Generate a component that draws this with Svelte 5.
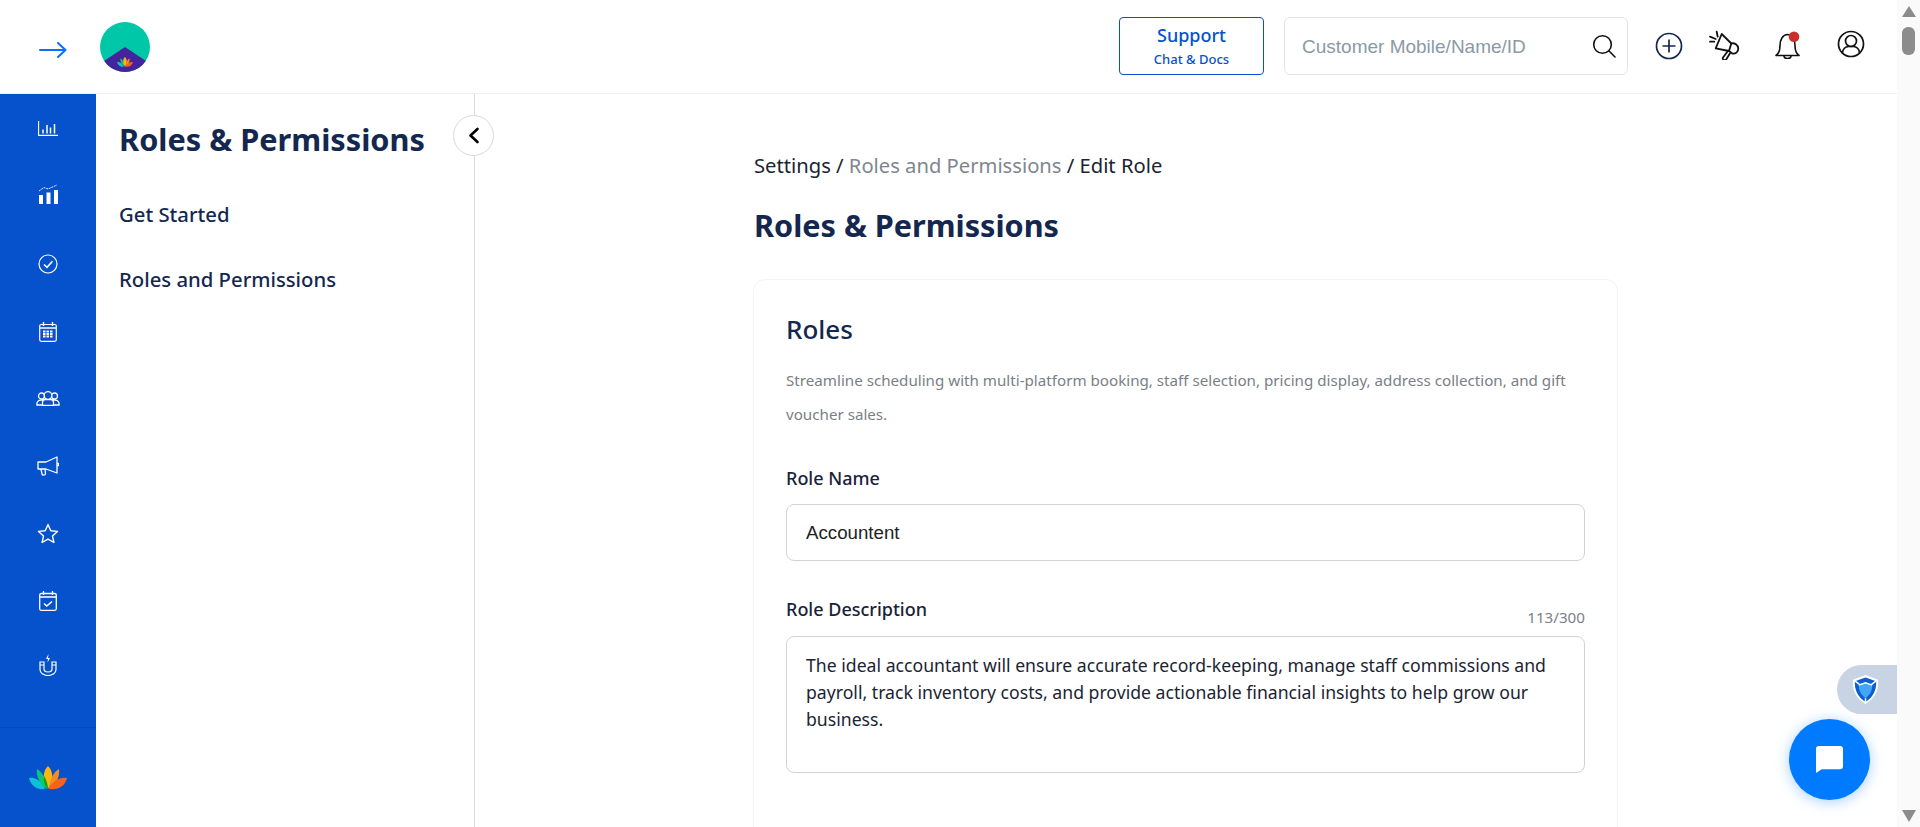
<script>
  const desc = "The ideal accountant will ensure accurate record-keeping, manage staff commissions and payroll, track inventory costs, and provide actionable financial insights to help grow our business.";
</script>

<div class="app">
  <div class="page">
    <header class="top">
      <svg class="arrow" width="28" height="16" viewBox="0 0 28 16" fill="none" stroke="#0d6efd" stroke-width="2" stroke-linecap="round" stroke-linejoin="round"><path d="M1 8H26.500M19 1l7.500 7-7.500 7"/></svg>
      <svg class="logo" width="50" height="52" viewBox="0 0 50 52">
        <defs><clipPath id="c"><circle cx="25" cy="26" r="25"/></clipPath></defs>
        <g clip-path="url(#c)">
          <rect width="50" height="52" fill="#00c7a8"/>
          <path d="M25 26L46 40V52H4V40Z" fill="#43249c"/>
        </g>
        <g transform="translate(17 36) scale(.42)">
          <path d="M0 12c6-1 13 3 16 11-8 1-14-3-16-11z" fill="#0dc1d6"/>
          <path d="M8 3c5 3 9 9 10 20-7-4-11-12-10-20z" fill="#0bc57a"/>
          <path d="M19 0c3 3 5 7 4 15l-4 8-4-8c-1-8 1-12 4-15z" fill="#fdb50f"/>
          <path d="M30 3c1 8-3 16-10 20 1-11 5-17 10-20z" fill="#f68b1f"/>
          <path d="M38 12c-2 8-8 12-18 11 3-8 11-12 18-11z" fill="#f6631a"/>
        </g>
      </svg>
      <div class="spacer"></div>
      <div class="support"><span class="s1">Support</span><span class="s2">Chat &amp; Docs</span></div>
      <div class="search">
        <span class="ph">Customer Mobile/Name/ID</span>
        <svg width="24" height="24" viewBox="0 0 24 24" fill="none" stroke="#111" stroke-width="1.600" stroke-linecap="round"><circle cx="10.500" cy="10.500" r="8.800"/><path d="M16.800 16.800L23 23"/></svg>
      </div>
      <svg class="hplus" width="28" height="28" viewBox="0 0 28 28" fill="none" stroke="#14274e" stroke-width="1.700"><circle cx="14" cy="14" r="12.500"/><path d="M14 7.500v13M7.500 14h13"/></svg>
      <svg class="hmega" width="32" height="30" viewBox="0 0 32 30" fill="none" stroke="#111" stroke-width="1.800" stroke-linejoin="round" stroke-linecap="round"><path d="M13.700 4L7.700 18.300 21 21 23.300 13.500z"/><path d="M23.300 13.500c3-1 7 1.500 7 5.300 0 3.500-3.300 5.500-6.300 4.500L21 21"/><path d="M19.500 21.500l-4.500 6c-1.300 1.700 1.800 3.700 3.300 1.700l3.700-6"/><path d="M8.700 1.700l1 5M2 6.700L7.700 9M2 11.700h4.300"/></svg>
      <svg class="hbell" width="25" height="28" viewBox="0 0 25 28" fill="none" stroke="#111" stroke-width="1.600" stroke-linejoin="round"><path d="M1 24.500c3-2 4-5 4-10 0-6 3-11 7.500-11s7.500 5 7.500 11c0 5 1 8 4 10z"/><path d="M9 25c0 3.500 7 3.500 7 0"/><circle cx="19" cy="5.700" r="5.300" fill="#c9302c" stroke="none"/></svg>
      <svg class="huser" width="28" height="28" viewBox="0 0 28 28" fill="none" stroke="#111" stroke-width="1.700"><circle cx="14" cy="14" r="12.500"/><circle cx="14" cy="11" r="5.500"/><path d="M5.500 23c0-4 3-6.500 6-6.500h5c3 0 6 2.500 6 6.500"/></svg>
    </header>

    <div class="body">
      <nav class="rail">
        <div class="ricons">
          <div class="ri"><svg width="20" height="15" viewBox="0 0 20 15" fill="none" stroke="#fff" stroke-width="1.100"><path d="M.600 0V14.400H20"/><path d="M5 12.500V8.500M9 12.500V4M12.500 12.500V6.500M16.500 12.500V3" stroke-width="1.500"/></svg></div>
          <div class="ri r2"><svg width="19" height="20" viewBox="0 0 19 20" fill="#fff"><rect x="0" y="11" width="4" height="9"/><rect x="7.500" y="8.500" width="4" height="11.500"/><rect x="15" y="6" width="4" height="14"/><path d="M0 7l5-3.500 4 1.500 9-4" fill="none" stroke="#fff" stroke-width=".9" stroke-dasharray="2 .8"/></svg></div>
          <div class="ri"><svg width="20" height="20" viewBox="0 0 20 20" fill="none" stroke="#fff" stroke-width="1.200"><circle cx="10" cy="10" r="9"/><path d="M6 10.500l3 2.800 5.500-6" stroke-width="1.600"/></svg></div>
          <div class="ri r4"><svg width="18" height="20" viewBox="0 0 18 20" fill="none" stroke="#fff" stroke-width="1.200"><rect x=".7" y="2.500" width="16.600" height="16.800" rx="1.500"/><path d="M4.500 0v4M13.500 0v4M1 6h16" stroke-width="1.400"/><path d="M4 9.500h10M4 12h10M4 14.500h10" stroke-width="1.800" stroke-dasharray="2.500 1"/></svg></div>
          <div class="ri"><svg width="24" height="15" viewBox="0 0 24 15" fill="none" stroke="#fff" stroke-width="1.300"><circle cx="5.500" cy="5" r="3"/><circle cx="18.500" cy="5" r="3"/><path d="M1 14c-.6-3 1.500-5 4-5h14c2.500 0 4.600 2 4 5z"/><path d="M6.500 14.400V11c0-1.500 1.500-2.500 3-2.500h5c1.500 0 3 1 3 2.500v3.400z" fill="#0552cc"/><circle cx="12" cy="4.500" r="3.800" fill="#0552cc"/></svg></div>
          <div class="ri"><svg width="22" height="20" viewBox="0 0 22 20" fill="none" stroke="#fff" stroke-width="1.300" stroke-linejoin="round"><path d="M1 6h8L20 1v16L9 13H1z"/><path d="M4 13l1 5c.3 1.500 3.500 1.500 3.500-.5L8 13M20 7.500h1.500v2H20"/></svg></div>
          <div class="ri"><svg width="22" height="21" viewBox="0 0 22 21" fill="none" stroke="#fff" stroke-width="1.400" stroke-linejoin="round"><path d="M11 1.500l2.800 6.200 6.700.7-5 4.500 1.400 6.600L11 16.100 5.100 19.500l1.400-6.600-5-4.500 6.700-.7z"/></svg></div>
          <div class="ri"><svg width="18" height="20" viewBox="0 0 18 20" fill="none" stroke="#fff" stroke-width="1.300"><rect x=".7" y="2.500" width="16.600" height="16.800" rx="1.500"/><path d="M4.500 0v4M13.500 0v4M1 6h16"/><path d="M5 12.500l2.800 2.500L13 10.500" stroke-width="1.600"/></svg></div>
          <div class="ri r9"><svg width="18" height="22" viewBox="0 0 18 22" fill="none" stroke="#fff" stroke-width="1.200"><path d="M1 8h4v7c0 2 2 3 4 3s4-1 4-3V8h4v7.500c0 3.500-3.500 6-8 6s-8-2.500-8-6z"/><path d="M1 11h4M13 11h4"/><path d="M9.500 0L7 5h2l-.5 3.500L11 4H9z" fill="#fff" stroke="none"/></svg></div>
        </div>
        <div class="rfoot">
          <svg width="38" height="24" viewBox="0 0 38 24">
            <path d="M0 12c6-1 13 3 16 11-8 1-14-3-16-11z" fill="#0dc1d6"/>
            <path d="M8 3c5 3 9 9 10 20-7-4-11-12-10-20z" fill="#0bc57a"/>
            <path d="M19 0c3 3 5 7 4 15l-4 8-4-8c-1-8 1-12 4-15z" fill="#fdb50f"/>
            <path d="M30 3c1 8-3 16-10 20 1-11 5-17 10-20z" fill="#f68b1f"/>
            <path d="M38 12c-2 8-8 12-18 11 3-8 11-12 18-11z" fill="#f6631a"/>
            <path d="M15 10c2 3 4 8 4 13-3-3-5-8-4-13z" fill="#17a00e"/>
          </svg>
        </div>
      </nav>

      <aside class="sub">
        <h2>Roles &amp; Permissions</h2>
        <a class="first">Get Started</a>
        <a>Roles and Permissions</a>
        <button class="collapse" aria-label="collapse"><svg width="12" height="17" viewBox="0 0 12 17" fill="none" stroke="#000" stroke-width="2.600" stroke-linecap="round" stroke-linejoin="round"><path d="M9.500 2L2.500 8.500l7 6.500"/></svg></button>
      </aside>

      <main class="main">
        <div class="crumbs">Settings / <span>Roles and Permissions</span> / Edit Role</div>
        <h1>Roles &amp; Permissions</h1>
        <section class="card">
          <h3>Roles</h3>
          <p class="desc">Streamline scheduling with multi-platform booking, staff selection, pricing display, address collection, and gift voucher sales.</p>
          <label class="lab" for="rn">Role Name</label>
          <input id="rn" class="inp" value="Accountent" />
          <div class="row">
            <label class="lab" for="rd">Role Description</label>
            <span class="count">113/300</span>
          </div>
          <textarea id="rd" class="ta" value={desc}></textarea>
        </section>
      </main>
    </div>
  </div>

  <div class="scroll">
    <div class="up"></div>
    <div class="thumb"></div>
    <div class="grow"></div>
    <div class="down"></div>
  </div>

  <div class="shield">
    <svg width="27" height="31" viewBox="0 0 28 30">
      <path d="M14 0L27 5c1 11-3 19-13 25C4 24 0 16 1 5z" fill="#fff"/>
      <path d="M14 2.500L25 6.500c.6 9-3 16.500-11 21.500C6 23 2.400 15.500 3 6.500z" fill="#0a5fd0"/>
      <path d="M14 8l7 2.500c0 6-2.500 10-7 13.500-4.500-3.500-7-7.500-7-13.500z" fill="#45a5f5"/>
      <path d="M14 24v4M3 6l5 4M25 6l-5 4M7 10.500L14 8l7 2.500" fill="none" stroke="#fff" stroke-width="1.500"/>
    </svg>
  </div>
  <div class="chat">
    <svg width="27" height="27" viewBox="0 0 28 28"><path d="M3 0h22a3 3 0 0 1 3 3v18a3 3 0 0 1-3 3H6l-6 4V3a3 3 0 0 1 3-3z" fill="#fff"/></svg>
  </div>
</div>

<style>
  :global(body) { margin: 0; background: #fff; overflow: hidden; }
  .app { position: relative; display: flex; width: 1920px; height: 827px; overflow: hidden; font-family: "Noto Sans", sans-serif; color: #14274e; }
  .page { flex: 1; min-width: 0; display: flex; flex-direction: column; }

  .top { height: 93px; flex: none; display: flex; align-items: center; border-bottom: 1px solid #f0f0f0; box-sizing: content-box; }
  .arrow { margin-left: 39px; margin-top: 7px; }
  .logo { margin-left: 33px; }
  .spacer { flex: 1; }
  .support { width: 145px; height: 58px; margin-top: -1px; border: 1px solid #0552cc; border-radius: 4px; box-sizing: border-box; display: flex; flex-direction: column; align-items: center; justify-content: center; color: #0552cc; font-weight: 500; }
  .s1 { font-size: 18px; line-height: 25px; }
  .s2 { font-size: 13px; line-height: 22px; }
  .search { margin-left: 20px; width: 344px; height: 58px; margin-top: -1px; border: 1px solid #e2e4e8; border-radius: 6px; display: flex; align-items: center; justify-content: space-between; padding: 0 11px 0 17px; box-sizing: border-box; }
  .ph { font-family: "Liberation Sans", sans-serif; font-size: 19px; line-height: 24px; margin-top: 2px; color: #8a9aa6; }
  .hplus { margin-left: 27px; margin-top: -1px; }
  .hmega { margin-left: 25px; margin-top: -3px; }
  .hbell { margin-left: 35px; margin-top: -3px; }
  .huser { margin-left: 37px; margin-right: 32px; margin-top: -5px; }

  .body { flex: 1; min-height: 0; display: flex; }
  .rail { width: 96px; flex: none; background: #0552cc; display: flex; flex-direction: column; }
  .ricons { flex: 1; padding-top: 1px; }
  .ri { height: 67.500px; display: flex; align-items: center; justify-content: center; }
  .r2 svg { margin-top: -5px; }
  .r4 svg { margin-top: 1px; }
  .r9 svg { margin-top: -8px; }
  .rfoot { height: 99px; border-top: 1px solid #0a4ab5; display: flex; align-items: center; justify-content: center; }

  .sub { position: relative; width: 379px; flex: none; border-right: 1px solid #dcdcdc; padding-left: 23px; box-sizing: border-box; }
  .sub h2 { margin: 22px 0 0; font-size: 30.700px; line-height: 46px; font-weight: 700; white-space: nowrap; }
  .sub a { display: block; font-size: 20.300px; font-weight: 500; line-height: 28px; color: #14274e; }
  .sub a.first { margin-top: 38px; margin-bottom: 37px; }
  .collapse { position: absolute; right: -20px; top: 21px; width: 41px; height: 41px; border-radius: 50%; background: #fff; border: 1px solid #d9d9d9; display: flex; align-items: center; justify-content: center; padding: 0; }

  .main { flex: 1; min-width: 0; padding-left: 279px; }
  .crumbs { margin-top: 56px; font-size: 20.200px; line-height: 30px; color: #1b2433; }
  .crumbs span { color: #80868f; }
  h1 { margin: 23px 0 0; font-size: 30.600px; line-height: 44px; font-weight: 700; }
  .card { margin: 32px 0 0 -1px; width: 865px; height: 600px; border: 1px solid #f3f3f5; border-radius: 12px; padding: 29px 32px; box-sizing: border-box; }
  h3 { margin: 0; font-size: 26px; font-weight: 500; line-height: 40px; }
  .desc { margin: 14px 0 0; font-size: 15.170px; line-height: 34px; color: #7a7f87; }
  .lab { display: block; font-size: 18px; font-weight: 500; line-height: 26px; color: #1a2238; }
  .desc + .lab { margin-top: 34px; }
  .inp { display: block; margin-top: 13px; width: 100%; height: 57px; box-sizing: border-box; border: 1px solid #d0d3d9; border-radius: 8px; padding: 0 19px; font: 18.700px "Liberation Sans", sans-serif; color: #222; }
  .row { display: flex; justify-content: space-between; align-items: flex-start; height: 40px; margin-top: 35px; }
  .count { align-self: flex-end; margin-bottom: 9px; font-size: 15.200px; color: #7a7f87; line-height: 20px; }
  .ta { display: block; width: 100%; height: 137px; box-sizing: border-box; border: 1px solid #d0d3d9; border-radius: 8px; padding: 15px 19px; font: 17.650px/27px "Noto Sans", sans-serif; color: #1b2433; resize: none; overflow: hidden; }

  .scroll { width: 23px; flex: none; background: #fafafa; display: flex; flex-direction: column; align-items: center; }
  .up { margin-top: 6px; width: 0; height: 0; border-left: 7px solid transparent; border-right: 7px solid transparent; border-bottom: 11px solid #8c8c8c; }
  .thumb { margin-top: 10px; width: 13px; height: 28px; border-radius: 6px; background: #8c8c8c; }
  .grow { flex: 1; }
  .down { margin-bottom: 5px; width: 0; height: 0; border-left: 7px solid transparent; border-right: 7px solid transparent; border-top: 12px solid #8c8c8c; }

  .shield { position: absolute; left: 1837px; top: 665px; width: 60px; height: 49px; background: #c8d3e3; border-radius: 25px 0 0 25px; display: flex; align-items: center; padding-left: 15px; box-sizing: border-box; }
  .chat { position: absolute; left: 1789px; top: 719px; width: 81px; height: 81px; border-radius: 50%; background: #007bff; box-shadow: 0 2px 14px rgba(0,123,255,.35); display: flex; align-items: center; justify-content: center; }
</style>
